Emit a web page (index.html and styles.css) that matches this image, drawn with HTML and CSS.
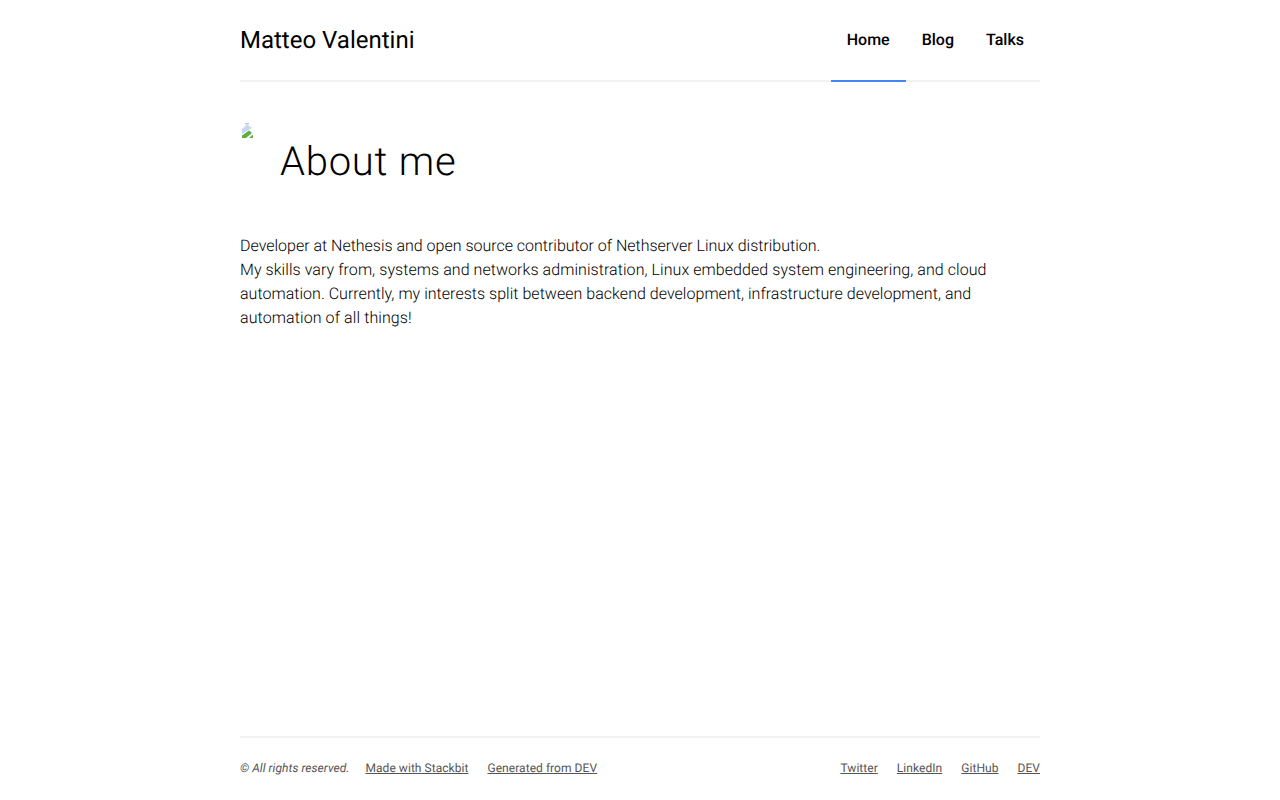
FILE: index.html
```html
<!DOCTYPE html>
<html lang="en">
<head>
  <meta charset="UTF-8">
  <meta name="viewport" content="width=device-width, initial-scale=1.0">
  <title>Matteo Valentini</title>
  <link rel="stylesheet" href="styles.css">
</head>
<body>
  <div class="page">
    <header class="site-header">
      <a class="site-title" href="#">Matteo Valentini</a>
      <nav class="site-nav">
        <a class="nav-link active" href="#">Home</a>
        <a class="nav-link" href="#">Blog</a>
        <a class="nav-link" href="#">Talks</a>
      </nav>
    </header>

    <main class="content">
      <div class="hero">
        <div class="avatar">
          <!-- broken image placeholder -->
          <svg width="16" height="16" viewBox="0 0 16 16">
            <path d="M3 0h7l3 3v4L2 14z" fill="#fff"/>
            <path d="M2 12V7l5-4.500L12 6z" fill="#c6d7f3"/>
            <path d="M5 1h4v1.500H5z" fill="#c3c8d2"/>
            <path d="M2 16v-2.500l7-5 3 2.500-6 5z" fill="#5fae3f"/>
            <path d="M9 16l4-3.500V16z" fill="#5fae3f"/>
          </svg>
        </div>
        <h1 class="hero-title">About me</h1>
      </div>
      <p class="bio">
        <span class="line-1">Developer at Nethesis and open source contributor of Nethserver Linux distribution.</span><br>
        <span class="line-2">My skills vary from, systems and networks administration, Linux embedded system engineering, and cloud</span>
        <span class="line-3">automation. Currently, my interests split between backend development, infrastructure development, and</span>
        <span class="line-4">automation of all things!</span>
      </p>
    </main>

    <footer class="site-footer">
      <div class="footer-left">
        <span class="copyright">© All rights reserved.</span>
        <a href="#">Made with Stackbit</a>
        <a href="#">Generated from DEV</a>
      </div>
      <div class="footer-right">
        <a href="#">Twitter</a>
        <a href="#">LinkedIn</a>
        <a href="#">GitHub</a>
        <a href="#">DEV</a>
      </div>
    </footer>
  </div>
</body>
</html>
```

FILE: styles.css
```css
* {
  box-sizing: border-box;
}
body {
  margin: 0;
  font-family: Roboto, sans-serif;
  text-rendering: geometricPrecision;
  color: #000;
  background: #fff;
}
a {
  color: inherit;
  text-decoration: none;
}
.page {
  width: 800px;
  height: 800px;
  margin: 0 auto;
  display: flex;
  flex-direction: column;
}
.site-header {
  height: 82px;
  border-bottom: 2px solid #f2f2f2;
  display: flex;
  justify-content: space-between;
  align-items: flex-start;
}
.site-title {
  font-size: 24px;
  line-height: 80px;
}
.site-nav {
  display: flex;
}
.nav-link {
  height: 82px;
  padding: 0 16px;
  font-size: 16px;
  font-weight: 500;
  line-height: 80px;
  border-bottom: 2px solid transparent;
}
.nav-link.active {
  border-bottom-color: #4285f4;
}
.content {
  flex: 1;
  padding-top: 40px;
}
.hero {
  display: flex;
  margin-bottom: 44px;
}
.avatar {
  width: 40px;
  height: 40px;
}
.avatar svg {
  display: block;
}
.hero-title {
  margin: 0;
  padding-top: 12px;
  font-size: 40px;
  font-weight: 300;
  line-height: 56px;
  letter-spacing: 0.75px;
}
.bio {
  margin: 0;
  font-size: 16px;
  font-weight: 300;
  line-height: 24px;
}
.line-1 {
  letter-spacing: -0.01px;
}
.line-2 {
  letter-spacing: 0.06px;
}
.line-3 {
  letter-spacing: 0.03px;
}
.line-4 {
  letter-spacing: 0.1px;
}
.site-footer {
  height: 64px;
  padding-bottom: 2px;
  border-top: 2px solid #f2f2f2;
  display: flex;
  justify-content: space-between;
  align-items: center;
  font-size: 12px;
  letter-spacing: 0.05px;
  color: #555;
}
.footer-left,
.footer-right {
  display: flex;
  gap: 19px;
}
.copyright {
  font-style: italic;
  margin-right: -3px;
}
.site-footer a {
  text-decoration: underline;
}
```
